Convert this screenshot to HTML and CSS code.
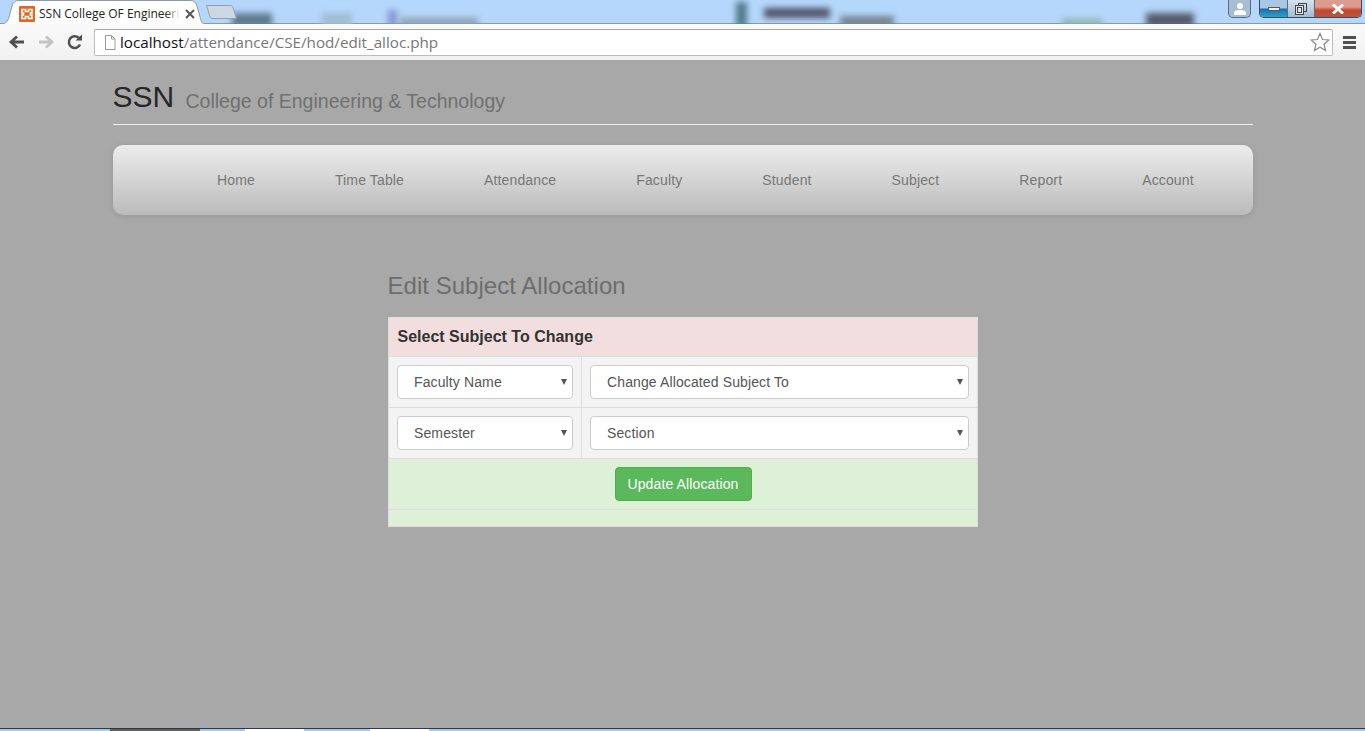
FILE: index.html
```html
<!doctype html>
<html lang="en">

<head>
  <meta charset="utf-8">
  <title>SSN College OF Engineering</title>
  <link rel="stylesheet" href="styles.css">
</head>

<body>
  <div class="browser">
    <div class="tabstrip">
      <span class="smudge s1"></span>
      <span class="smudge s2"></span>
      <span class="smudge s3"></span>
      <span class="smudge s4"></span>
      <span class="smudge s5"></span>
      <span class="smudge s6"></span>
      <span class="smudge s7"></span>
      <span class="smudge s8"></span>
      <span class="smudge s9"></span>

      <div class="tab">
        <svg class="tab-shape" width="206" height="25" viewBox="0 0 206 25">
          <path d="M0 24.500C6 24 8 21 9 17L12 6C13 2.500 15 .5 19 .5H190C194 .5 196 2.500 197 6L200 17C201 21 202 24 206 24.500Z" fill="#fff" stroke="#8b99a8" />
        </svg>
        <svg class="favicon" width="16" height="16" viewBox="0 0 16 16">
          <rect width="16" height="16" rx="1" fill="#e5661e" />
          <path d="M3 3.500H6.500V5.500H9.500V3.500H13V7H11.500V9H13V12.500H9.500V10.500H6.500V12.500H3V9H4.500V7H3Z" fill="none" stroke="#fff" stroke-width="1.600" />
        </svg>
        <span class="tab-title">SSN College OF Engineeri</span>
        <svg class="tab-close" width="10" height="10" viewBox="0 0 10 10">
          <path d="M1 1L9 9M9 1L1 9" stroke="#555" stroke-width="2" />
        </svg>
      </div>
      <svg class="new-tab" width="32" height="14" viewBox="0 0 32 14">
        <path d="M.5 .5H24C26 .5 26.500 1 27 2.500L30.500 13.500H7C5 13.500 4.500 13 4 11.500Z" fill="#ccd8e4" stroke="#8d9fb2" />
      </svg>

      <div class="window-controls">
        <div class="profile">
          <svg width="14" height="14" viewBox="0 0 14 14">
            <circle cx="7" cy="4" r="3" fill="#fff" />
            <path d="M1 13V11C1 9 3.500 8 7 8S13 9 13 11V13Z" fill="#fff" />
          </svg>
        </div>
        <div class="win-buttons">
          <div class="win-min"><span></span></div>
          <div class="win-max">
            <svg width="12" height="12" viewBox="0 0 12 12">
              <rect x="3.500" y=".5" width="8" height="8" fill="none" stroke="#444" />
              <rect x=".5" y="2.500" width="8" height="9" fill="#dfe6ee" stroke="#444" />
              <rect x="2.500" y="4.500" width="4" height="5" fill="none" stroke="#444" />
            </svg>
          </div>
          <div class="win-close">
            <svg width="14" height="10" viewBox="0 0 14 10">
              <path d="M2 .5L12 9.500M12 .5L2 9.500" stroke="#fff" stroke-width="3" />
            </svg>
          </div>
        </div>
      </div>
    </div>

    <div class="toolbar">
      <svg class="nav-icon" width="18" height="16" viewBox="0 0 18 16">
        <path d="M16 8H4M9 2.500L3 8L9 13.500" fill="none" stroke="#505050" stroke-width="2.800" />
      </svg>
      <svg class="nav-icon" width="18" height="16" viewBox="0 0 18 16">
        <path d="M2 8H14M9 2.500L15 8L9 13.500" fill="none" stroke="#c4c4c4" stroke-width="2.800" />
      </svg>
      <svg class="nav-icon" width="18" height="16" viewBox="0 0 18 16">
        <path d="M14 10.500A5.800 5.800 0 1 1 12.800 4" fill="none" stroke="#505050" stroke-width="2.600" />
        <path d="M9.500 6.500H16V.5Z" fill="#505050" />
      </svg>
      <div class="omnibox">
        <svg class="page-icon" width="12" height="15" viewBox="0 0 12 15">
          <path d="M1.500 .5H7.500L11 4V14.500H1.500Z" fill="#fff" stroke="#9a9a9a" />
          <path d="M7.500 .5V4H11" fill="none" stroke="#9a9a9a" />
        </svg>
        <span class="url"><span class="url-host">localhost</span>/attendance/CSE/hod/edit_alloc.php</span>
        <svg class="star" width="20" height="20" viewBox="0 0 20 20">
          <path d="M10 1.500L12.500 7.500L18.800 8L14 12.200L15.500 18.500L10 15.200L4.500 18.500L6 12.200L1.200 8L7.500 7.500Z" fill="#fff" stroke="#8a8a8a" stroke-width="1.200" />
        </svg>
      </div>
      <div class="menu-icon"><span></span><span></span><span></span></div>
    </div>
  </div>

  <div class="page">
    <div class="container">
      <div class="page-header">
        <h1>SSN <small>College of Engineering &amp; Technology</small></h1>
      </div>

      <ul class="main-nav">
        <li><a href="#">Home</a></li>
        <li><a href="#">Time Table</a></li>
        <li><a href="#">Attendance</a></li>
        <li><a href="#">Faculty</a></li>
        <li><a href="#">Student</a></li>
        <li><a href="#">Subject</a></li>
        <li><a href="#">Report</a></li>
        <li><a href="#">Account</a></li>
      </ul>

      <div class="alloc">
        <h2>Edit Subject Allocation</h2>
        <form>
          <table class="alloc-table">
            <colgroup>
              <col class="col-left">
              <col>
            </colgroup>
            <tr class="row-danger">
              <th colspan="2">Select Subject To Change</th>
            </tr>
            <tr>
              <td>
                <label class="pick"><select>
                    <option>Faculty Name</option>
                  </select></label>
              </td>
              <td>
                <label class="pick"><select>
                    <option>Change Allocated Subject To</option>
                  </select></label>
              </td>
            </tr>
            <tr>
              <td>
                <label class="pick"><select>
                    <option>Semester</option>
                  </select></label>
              </td>
              <td>
                <label class="pick"><select>
                    <option>Section</option>
                  </select></label>
              </td>
            </tr>
            <tr class="row-success">
              <td colspan="2" class="center"><button type="button" class="btn-success">Update Allocation</button></td>
            </tr>
            <tr class="row-success">
              <td colspan="2" class="empty"></td>
            </tr>
          </table>
        </form>
      </div>
    </div>
  </div>

  <div class="taskbar">
    <span class="task-dark"></span>
    <span class="task-item first"></span>
    <span class="task-item second"></span>
  </div>
</body>

</html>
```

FILE: styles.css
```css
html,
body {
  height: 100%;
}

body {
  margin: 0;
  display: flex;
  flex-direction: column;
  overflow: hidden;
  background: #a8a8a8;
  font-family: "Liberation Sans", Arial, sans-serif;
  font-size: 14px;
  color: #333;
}

/* browser window */
.browser {
  flex: none;
}

.tabstrip {
  position: relative;
  height: 24px;
  overflow: hidden;
  background: #b5d7fb;
  box-shadow: inset 0 -1px 0 #8a98a8;
}

.smudge {
  position: absolute;
  bottom: -3px;
  filter: blur(3px);
}

.s1 { left: 232px; width: 40px; height: 14px; background: #5f7a8e; }
.s2 { left: 322px; width: 30px; height: 14px; background: #a0bcd6; }
.s3 { left: 388px; width: 9px; height: 17px; background: #8494cc; }
.s4 { left: 400px; width: 78px; height: 9px; background: #8e9fae; }
.s5 { left: 736px; width: 11px; height: 25px; background: #4f7a8a; }
.s6 { left: 764px; width: 66px; height: 10px; bottom: auto; top: 8px; background: #4e5368; }
.s7 { left: 840px; width: 54px; height: 11px; background: #74858f; }
.s8 { left: 1062px; width: 40px; height: 8px; background: #8fb0aa; }
.s9 { left: 1146px; width: 48px; height: 14px; background: #555a6c; }

.tab {
  position: absolute;
  left: 0;
  top: 0;
  width: 206px;
  height: 25px;
  display: flex;
  align-items: center;
}

.tab-shape {
  position: absolute;
  left: 0;
  top: 0;
}

.favicon {
  position: relative;
  margin-left: 19px;
  margin-top: 2px;
}

.tab-title {
  position: relative;
  margin-left: 4px;
  width: 141px;
  margin-top: 2px;
  overflow: hidden;
  white-space: nowrap;
  font-family: "Open Sans", sans-serif;
  font-size: 12px;
  color: #222;
}

.tab-title::after {
  content: "";
  position: absolute;
  right: 0;
  top: 0;
  bottom: 0;
  width: 14px;
  background: linear-gradient(to right, rgba(255, 255, 255, 0), #fff);
}

.tab-close {
  position: relative;
  margin-left: 5px;
  margin-top: 2px;
}

.new-tab {
  position: absolute;
  left: 206px;
  top: 5px;
}

.window-controls {
  position: absolute;
  right: 3px;
  top: 0;
  display: flex;
  gap: 8px;
}

.profile {
  width: 23px;
  height: 18px;
  box-sizing: border-box;
  display: flex;
  align-items: center;
  justify-content: center;
  background: #a7bdd3;
  border: 1px solid #5c6b7b;
  border-top: 0;
  border-radius: 0 0 5px 5px;
}

.win-buttons {
  display: flex;
  height: 18px;
  box-sizing: border-box;
  border: 1px solid #3d4a58;
  border-top: 0;
  border-radius: 0 0 5px 5px;
  overflow: hidden;
}

.win-min {
  width: 27px;
  display: flex;
  align-items: center;
  justify-content: center;
  background: linear-gradient(#a9c6e2 45%, #1d6fa8 55%, #25a7cc);
}

.win-min span {
  width: 12px;
  height: 4px;
  background: #eef3f8;
  border: 1px solid #556;
  box-sizing: border-box;
}

.win-max {
  width: 26px;
  display: flex;
  align-items: center;
  justify-content: center;
  background: linear-gradient(#d7e3ef, #a5bacf);
  border-left: 1px solid #5c6b7b;
}

.win-close {
  width: 46px;
  display: flex;
  align-items: center;
  justify-content: center;
  background: linear-gradient(#dc9c90 40%, #c8452f 60%, #b5573f);
  border-left: 1px solid #5c6b7b;
}

.toolbar {
  height: 36px;
  box-sizing: border-box;
  display: flex;
  align-items: center;
  padding: 0 8px;
  background: linear-gradient(#fafafa, #f1f1f1);
}

.nav-icon {
  flex: none;
  margin-right: 11px;
}

.nav-icon:nth-child(3) {
  margin-right: 10px;
}

.omnibox {
  flex: 1;
  height: 27px;
  box-sizing: border-box;
  display: flex;
  align-items: center;
  padding: 0 2px 0 9px;
  background: #fff;
  border: 1px solid #bdbdbd;
  border-top-color: #a5a5a5;
  border-radius: 2px;
}

.page-icon {
  flex: none;
}

.url {
  flex: 1;
  margin-left: 4px;
  font-family: "Open Sans", sans-serif;
  font-size: 15.2px;
  color: #777;
  white-space: nowrap;
}

.url-host {
  color: #111;
}

.star {
  flex: none;
}

.menu-icon {
  width: 13px;
  margin-left: 10px;
  margin-right: 1px;
  display: flex;
  flex-direction: column;
  gap: 2px;
}

.menu-icon span {
  height: 3px;
  background: #505050;
}

/* page */
.page {
  flex: 1;
  min-height: 0;
}

.container {
  width: 1140px;
  margin: 0 auto;
}

.page-header {
  padding-top: 19px;
  padding-bottom: 9px;
  border-bottom: 1px solid #eee;
}

h1 {
  margin: 0;
  font-size: 30px;
  font-weight: 400;
  line-height: 36px;
  color: #262626;
}

h1 small {
  margin-left: 3px;
  font-size: 19.5px;
  line-height: 1;
  vertical-align: -1px;
  color: #707070;
}

.main-nav {
  display: flex;
  height: 70px;
  box-sizing: border-box;
  margin: 20px 0 0;
  padding: 0 0 0 64.500px;
  list-style: none;
  border-radius: 10px;
  background: linear-gradient(#ececec, #bbb);
  box-shadow: 0 1px 6px rgba(0, 0, 0, .1);
}

.main-nav a {
  display: block;
  padding: 0 40px;
  line-height: 70px;
  letter-spacing: .14px;
  color: #777;
  text-decoration: none;
}

.alloc {
  width: 590px;
  margin: 0 auto;
  margin-top: 54px;
}

h2 {
  margin: 0 0 14px;
  font-size: 24px;
  font-weight: 400;
  line-height: 34px;
  letter-spacing: .03px;
  color: #6d6d6d;
}

.alloc-table {
  width: 590px;
  table-layout: fixed;
  border-collapse: collapse;
  background: #f3f3f3;
  border: 1px solid #ddd;
}

.col-left {
  width: 193px;
}

.alloc-table th,
.alloc-table td {
  padding: 8px;
  border: 1px solid #ddd;
}

.alloc-table th {
  height: 22px;
  text-align: left;
  padding-left: 9px;
  font-size: 16px;
  color: #333;
  background: #f2dede;
}

.row-success td {
  background: #dff0d8;
}

.center {
  text-align: center;
}

.alloc-table .empty {
  height: 0;
}

.pick {
  position: relative;
  display: block;
}

.pick::after {
  content: "";
  position: absolute;
  right: 6px;
  top: 14px;
  border-left: 3px solid transparent;
  border-right: 3px solid transparent;
  border-top: 6px solid #555;
  pointer-events: none;
}

.pick select {
  display: block;
  width: 100%;
  height: 34px;
  padding: 0 16px 0 16.500px;
  appearance: none;
  background: #fff;
  border: 1px solid #ccc;
  border-radius: 4px;
  font-family: inherit;
  font-size: 14px;
  letter-spacing: .12px;
  color: #555;
}

.btn-success {
  display: inline-block;
  vertical-align: top;
  width: 137px;
  height: 34px;
  margin-left: 1px;
  padding: 0;
  font-family: inherit;
  font-size: 14px;
  letter-spacing: .12px;
  color: #fff;
  background: #5cb85c;
  border: 1px solid #4cae4c;
  border-radius: 4px;
}

/* windows taskbar edge */
.taskbar {
  position: relative;
  flex: none;
  height: 3px;
  box-sizing: border-box;
  border-top: 1px solid #2b3a4a;
  background: #a9c8e8;
}

.task-dark {
  position: absolute;
  left: 110px;
  top: 0;
  width: 90px;
  height: 2px;
  background: #5e5e5e;
}

.task-item {
  position: absolute;
  top: 0;
  width: 59px;
  height: 2px;
  background: #fff;
}

.first {
  left: 245px;
}

.second {
  left: 370px;
}
```
